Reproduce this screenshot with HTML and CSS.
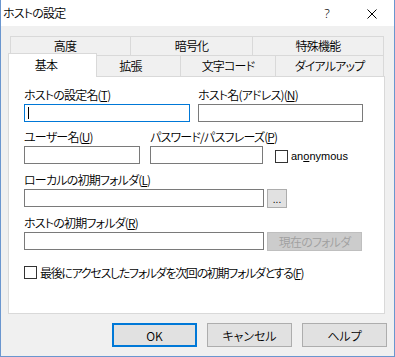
FILE: index.html
```html
<!DOCTYPE html>
<html lang="ja">
<head>
<meta charset="utf-8">
<title>ホストの設定</title>
<link rel="stylesheet" href="styles.css">
</head>
<body>
<div class="window">
  <div class="titlebar">
    <span class="title">ホストの設定</span>
    <span class="tb-btn tb-help">?</span>
    <span class="tb-btn tb-close">
      <svg width="10" height="10" viewBox="0 0 10 10"><path d="M0.5 0.5 L9.5 9.5 M9.5 0.5 L0.5 9.5" stroke="#000" stroke-width="1" fill="none"/></svg>
    </span>
  </div>
  <div class="client">
    <div class="tabrow back">
      <div class="tab t-adv">高度</div>
      <div class="tab t-enc">暗号化</div>
      <div class="tab t-spec">特殊機能</div>
    </div>
    <div class="tabrow front">
      <div class="tab sel">基本</div>
      <div class="tab t-ext">拡張</div>
      <div class="tab t-code">文字コード</div>
      <div class="tab t-dial">ダイアルアップ</div>
    </div>
    <div class="panel">
      <div class="row">
        <div class="group g-name">
          <div class="field-label">ホストの設定名(<u>T</u>)</div>
          <div class="edit focus"><span class="caret"></span></div>
        </div>
        <div class="group g-host">
          <div class="field-label">ホスト名(アドレス)(<u>N</u>)</div>
          <div class="edit"></div>
        </div>
      </div>
      <div class="row sp">
        <div class="group g-user">
          <div class="field-label">ユーザー名(<u>U</u>)</div>
          <div class="edit"></div>
        </div>
        <div class="group g-pass">
          <div class="field-label">パスワード/パスフレーズ(<u>P</u>)</div>
          <div class="edit"></div>
        </div>
        <div class="anon">
          <span class="check"></span>
          <span class="anon-text">an<u>o</u>nymous</span>
        </div>
      </div>
      <div class="group sp">
        <div class="field-label">ローカルの初期フォルダ(<u>L</u>)</div>
        <div class="line">
          <div class="edit wide"></div>
          <div class="pbtn browse">...</div>
        </div>
      </div>
      <div class="group sp">
        <div class="field-label">ホストの初期フォルダ(<u>R</u>)</div>
        <div class="line">
          <div class="edit wide"></div>
          <div class="pbtn current disabled">現在のフォルダ</div>
        </div>
      </div>
      <div class="check-row">
        <span class="check"></span>
        <span class="check-text">最後にアクセスしたフォルダを次回の初期フォルダとする(<u>F</u>)</span>
      </div>
    </div>
    <div class="buttons">
      <div class="btn default">OK</div>
      <div class="btn">キャンセル</div>
      <div class="btn">ヘルプ</div>
    </div>
  </div>
</div>
</body>
</html>
```

FILE: styles.css
```css
* { box-sizing: border-box; }
html, body { margin: 0; padding: 0; }
body {
  width: 395px;
  height: 357px;
  overflow: hidden;
  background: #ffffff;
  font-family: "Noto Sans CJK JP", "Noto Sans", sans-serif;
  font-size: 12px;
  font-weight: 350;
  color: #000;
  font-feature-settings: "palt";
  letter-spacing: -0.8px;
}
u { text-decoration: underline; text-underline-offset: 1px; }

.window {
  width: 395px;
  height: 357px;
  border: 1px solid #6a96cf;
  border-top: none;
  background: #f0f0f0;
  display: flex;
  flex-direction: column;
}

.titlebar {
  height: 26px;
  background: #fff;
  display: flex;
  align-items: center;
  flex: none;
}
.title { flex: 1; padding-left: 2px; line-height: 26px; letter-spacing: -0.8px; }
.tb-btn {
  width: 46px;
  height: 26px;
  display: flex;
  align-items: center;
  justify-content: center;
  font-family: "Noto Sans", sans-serif;
  font-size: 13px;
  letter-spacing: 0;
}
.tb-close { width: 44px; padding-top: 2px; }

.client { flex: 1; padding-top: 10px; }

.tabrow { display: flex; }
.tab {
  border-top: 1px solid #d9d9d9;
  border-right: 1px solid #d9d9d9;
  text-align: center;
  white-space: nowrap;
}
.back .tab { height: 19px; line-height: 18px; }
.back { margin-left: 9px; }
.back .tab:first-child { border-left: 1px solid #d9d9d9; }
.t-adv { width: 121px; padding-right: 11px; }
.t-enc { width: 122px; }
.t-spec { width: 131px; }

.front { margin-left: 7px; height: 21px; align-items: flex-start; }
.front .tab { height: 21px; line-height: 20px; }
.front .tab.sel {
  width: 89px;
  height: 24px;
  margin-top: -2px;
  border-left: 1px solid #d9d9d9;
  background: #fff;
  line-height: 21px;
  padding-right: 13px;
  position: relative;
  z-index: 1;
}
.t-ext { width: 84px; padding-right: 16px; }
.t-code { width: 95px; }
.t-dial { width: 108px; }

.panel {
  margin-left: 7px;
  width: 377px;
  height: 238px;
  border: 1px solid #d9d9d9;
  background: #fff;
  padding: 10px 0 0 15px;
}

.row { display: flex; }
.sp { margin-top: 7px; }
.field-label {
  height: 16px;
  line-height: 16px;
  margin-bottom: 1px;
  white-space: nowrap;
}
.edit {
  height: 18px;
  border: 1px solid #7a7a7a;
  background: #fff;
  position: relative;
}
.edit.focus { border-color: #0078d7; }
.caret {
  position: absolute;
  left: 3px;
  top: 2px;
  width: 1px;
  height: 12px;
  background: #000;
}
.g-name { width: 166px; }
.g-host { width: 165px; margin-left: 8px; }
.g-user { width: 116px; }
.g-pass { width: 113px; margin-left: 10px; }

.anon {
  margin-left: 12px;
  margin-top: 18px;
  height: 18px;
  display: flex;
  align-items: center;
}
.check {
  width: 13px;
  height: 13px;
  border: 1px solid #333;
  background: #fff;
  flex: none;
}
.anon-text {
  margin-left: 3px;
  font-family: "Liberation Sans", sans-serif;
  font-size: 11px;
  font-weight: 400;
  letter-spacing: 0;
}

.line { display: flex; }
.edit.wide { width: 240px; }
.pbtn {
  height: 19px;
  margin-left: 3px;
  background: #e1e1e1;
  border: 1px solid #adadad;
  display: flex;
  align-items: center;
  justify-content: center;
}
.browse {
  width: 20px;
  font-family: "Liberation Sans", sans-serif;
  font-size: 10px;
  font-weight: 400;
  letter-spacing: 0;
  padding-top: 2px;
}
.current { width: 95px; }
.disabled { background: #cccccc; border-color: #bfbfbf; color: #a0a0a0; }

.check-row {
  margin-top: 13px;
  height: 16px;
  display: flex;
  align-items: center;
  white-space: nowrap;
}
.check-text { margin-left: 3px; letter-spacing: -1.3px; }

.buttons {
  display: flex;
  justify-content: flex-end;
  gap: 10px;
  margin-top: 9px;
  padding-right: 7px;
}
.btn {
  width: 85px;
  height: 24px;
  border: 1px solid #adadad;
  background: #e1e1e1;
  display: flex;
  align-items: center;
  justify-content: center;
  letter-spacing: 0;
}
.btn.default { border: 2px solid #0078d7; }
```
